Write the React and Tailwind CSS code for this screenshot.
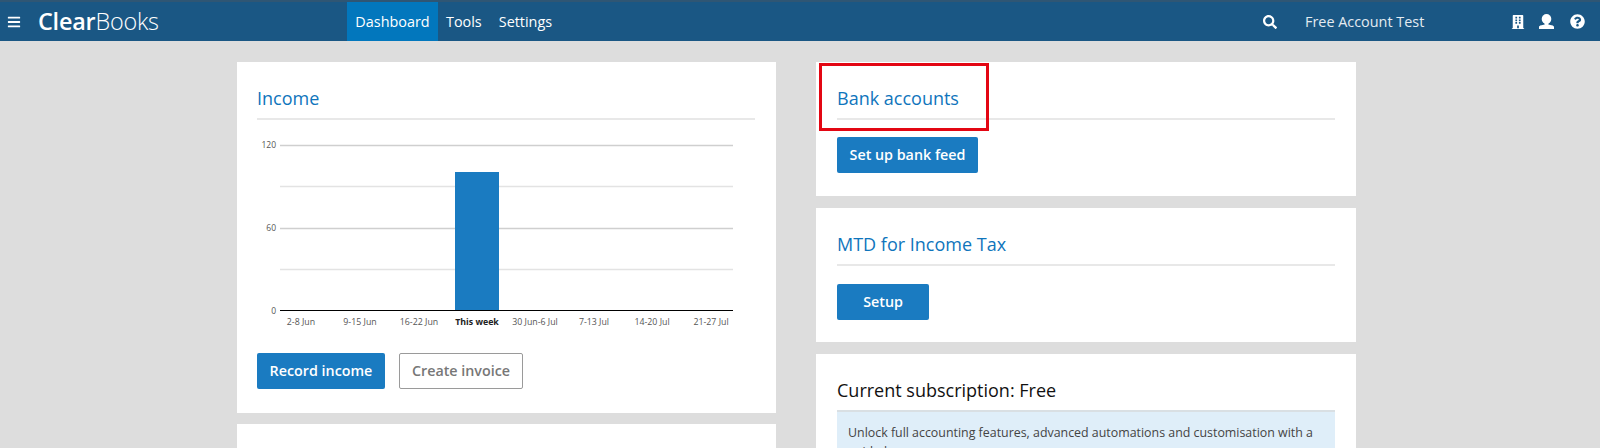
import React from 'react';
import { FaBars, FaSearch, FaBuilding, FaQuestionCircle } from 'react-icons/fa';

const font = { fontFamily: '"Open Sans", sans-serif' };

const grid = [145, 186, 228, 269];
const weeks = [
    ['2-8 Jun', 301],
    ['9-15 Jun', 360],
    ['16-22 Jun', 419],
    ['This week', 477],
    ['30 Jun-6 Jul', 535],
    ['7-13 Jul', 594],
    ['14-20 Jul', 652],
    ['21-27 Jul', 711],
];

const Chart = () => (
    <svg width="497" height="200" viewBox="258 135 497 200" className="ml-[1px] block">
        {grid.map((y, i) => (
            <line key={y} x1="280" x2="733" y1={y + 0.5} y2={y + 0.5} stroke={i % 2 === 0 ? '#cfcfcf' : '#e3e3e3'} strokeWidth="1.5" />
        ))}
        <rect x="455" y="172" width="44" height="138" fill="#1a7bc1" />
        <line x1="280" x2="733" y1="310.5" y2="310.5" stroke="#000" strokeWidth="1" />
        <text x="276" y="148" textAnchor="end" fontSize="8.5" fill="#555">120</text>
        <text x="276" y="231" textAnchor="end" fontSize="8.5" fill="#555">60</text>
        <text x="276" y="314" textAnchor="end" fontSize="8.5" fill="#555">0</text>
        {weeks.map(([label, x]) => (
            <text key={label} x={x} y="325" textAnchor="middle" fontSize="8.8" fontWeight={label === 'This week' ? 700 : 400} fill={label === 'This week' ? '#222' : '#555'}>
                {label}
            </text>
        ))}
    </svg>
);

const Card = ({ title, children, className = '' }) => (
    <section className={`bg-white pr-[21px] ${className}`}>
        <h2 className="h-[58px] pt-[21px] border-b-2 border-[#e8e8e8] text-[18px] leading-[30px] text-[#0f75bc]">{title}</h2>
        {children}
    </section>
);

const BlueButton = ({ children, className = '' }) => (
    <button className={`h-[36px] rounded-[2px] bg-[#1a7bc1] text-[14.3px] font-semibold text-white ${className}`}>{children}</button>
);

const App = () => {
    return (
        <div style={font} className="h-[448px] overflow-hidden bg-[#dddddd]">
            <header className="flex h-[41px] items-stretch border-t-2 border-[#2f5674] bg-[#1a5784] text-white">
                <div className="flex w-[347px] items-center">
                    <FaBars className="ml-[7px] text-[14px]" />
                    <div className="ml-[17px] text-[23.4px] leading-none tracking-[-0.2px]">
                        <span className="font-semibold">Clear</span>
                        <span className="font-light">Books</span>
                    </div>
                </div>
                <nav className="flex text-[14.4px]">
                    <a className="flex w-[91px] items-center justify-center bg-[#0277bd]">Dashboard</a>
                    <a className="ml-[8px] flex items-center">Tools</a>
                    <a className="ml-[17px] flex items-center">Settings</a>
                </nav>
                <div className="ml-auto flex items-center pr-[15px]">
                    <FaSearch className="text-[14px]" />
                    <span className="ml-[28px] w-[206px] text-[14.4px] text-[#e4ebf1]">Free Account Test</span>
                    <FaBuilding className="text-[14px]" />
                    <svg width="15" height="15" viewBox="0 0 15 15" className="ml-[14px]" fill="currentColor">
                        <ellipse cx="7.5" cy="5" rx="4.800" ry="5" />
                        <path d="M5.500 8.500h4v2.200c2.600.2 5.500.6 5.500 2.500V15H0v-1.800c0-1.900 2.900-2.300 5.500-2.500z" />
                    </svg>
                    <FaQuestionCircle className="ml-[16px] text-[15px]" />
                </div>
            </header>

            <main className="flex gap-[40px] pt-[21px] pl-[237px]">
                <div className="flex w-[539px] flex-col gap-[11px]">
                    <Card title="Income" className="h-[351px] pl-[20px]">
                        <div className="mt-[15px]"><Chart /></div>
                        <div className="mt-[18px] flex gap-[14px]">
                            <BlueButton className="w-[128px]">Record income</BlueButton>
                            <button className="h-[36px] w-[124px] rounded-[2px] border border-[#9a9a9a] bg-white text-[14.3px] font-semibold text-[#777]">Create invoice</button>
                        </div>
                    </Card>
                    <section className="h-[60px] bg-white" />
                </div>

                <div className="relative flex w-[540px] flex-col gap-[12px]">
                    <div className="absolute left-[3px] top-[1px] h-[68px] w-[170px] border-[3px] border-[#e30613]" />
                    <Card title="Bank accounts" className="h-[134px] pl-[21px]">
                        <BlueButton className="mt-[17px] w-[141px]">Set up bank feed</BlueButton>
                    </Card>
                    <Card title="MTD for Income Tax" className="h-[134px] pl-[21px]">
                        <BlueButton className="mt-[18px] w-[92px]">Setup</BlueButton>
                    </Card>
                    <section className="bg-white px-[21px]">
                        <h2 className="h-[58px] pt-[21px] border-b-2 border-[#d9dfe3] text-[18px] leading-[30px] text-[#111]">Current subscription: Free</h2>
                        <div className="bg-[#dfeef9] px-[11px] py-[11px] text-[12.4px] leading-[19px] text-[#444]">
                            Unlock full accounting features, advanced automations and customisation with a paid plan.
                        </div>
                    </section>
                </div>
            </main>
        </div>
    );
};

export default App;
